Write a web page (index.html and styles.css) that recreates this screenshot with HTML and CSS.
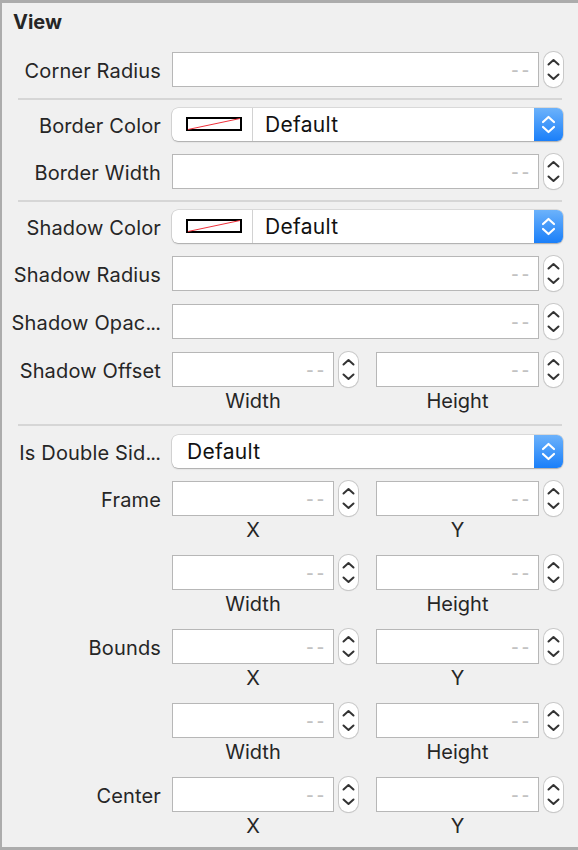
FILE: index.html
```html
<!DOCTYPE html>
<html>
<head>
<meta charset="utf-8">
<link rel="stylesheet" href="styles.css">
</head>
<body>
<div class="panel">
  <div class="title">View</div>

  <div class="section">
    <div class="row">
      <div class="label">Corner Radius</div>
      <div class="single">
        <div class="field"><span class="ph">--</span></div>
        <div class="stepper"><svg viewBox="0 0 19 35" width="19" height="35"><path d="M4.5 12.5 L9.5 8 L14.5 12.5" /><path d="M4.5 22.5 L9.5 27 L14.5 22.5" /></svg></div>
      </div>
    </div>
  </div>

  <div class="sep"></div>

  <div class="section">
    <div class="row">
      <div class="label label-pop">Border Color</div>
      <div class="popup">
        <div class="swatch"><svg viewBox="0 0 56 14" width="56" height="14"><rect x="1" y="1" width="54" height="12" fill="#fff" stroke="#000" stroke-width="2"/><line x1="2" y1="12.5" x2="54" y2="1.5" stroke="#f0323c" stroke-width="1"/></svg></div>
        <div class="pop-text">Default</div>
        <div class="pop-btn"><svg viewBox="0 0 29 33" width="29" height="33"><path d="M9 14 L14.5 9 L20 14" /><path d="M9 19 L14.5 24 L20 19" /></svg></div>
      </div>
    </div>
    <div class="row">
      <div class="label">Border Width</div>
      <div class="single">
        <div class="field"><span class="ph">--</span></div>
        <div class="stepper"><svg viewBox="0 0 19 35" width="19" height="35"><path d="M4.5 12.5 L9.5 8 L14.5 12.5" /><path d="M4.5 22.5 L9.5 27 L14.5 22.5" /></svg></div>
      </div>
    </div>
  </div>

  <div class="sep"></div>

  <div class="section">
    <div class="row">
      <div class="label label-pop">Shadow Color</div>
      <div class="popup">
        <div class="swatch"><svg viewBox="0 0 56 14" width="56" height="14"><rect x="1" y="1" width="54" height="12" fill="#fff" stroke="#000" stroke-width="2"/><line x1="2" y1="12.5" x2="54" y2="1.5" stroke="#f0323c" stroke-width="1"/></svg></div>
        <div class="pop-text">Default</div>
        <div class="pop-btn"><svg viewBox="0 0 29 33" width="29" height="33"><path d="M9 14 L14.5 9 L20 14" /><path d="M9 19 L14.5 24 L20 19" /></svg></div>
      </div>
    </div>
    <div class="row">
      <div class="label">Shadow Radius</div>
      <div class="single">
        <div class="field"><span class="ph">--</span></div>
        <div class="stepper"><svg viewBox="0 0 19 35" width="19" height="35"><path d="M4.5 12.5 L9.5 8 L14.5 12.5" /><path d="M4.5 22.5 L9.5 27 L14.5 22.5" /></svg></div>
      </div>
    </div>
    <div class="row">
      <div class="label">Shadow Opac<span class="ell">...</span></div>
      <div class="single">
        <div class="field"><span class="ph">--</span></div>
        <div class="stepper"><svg viewBox="0 0 19 35" width="19" height="35"><path d="M4.5 12.5 L9.5 8 L14.5 12.5" /><path d="M4.5 22.5 L9.5 27 L14.5 22.5" /></svg></div>
      </div>
    </div>
    <div class="row">
      <div class="label">Shadow Offset</div>
      <div class="pair">
        <div class="group g-left">
          <div class="field"><span class="ph">--</span></div>
          <div class="stepper"><svg viewBox="0 0 19 35" width="19" height="35"><path d="M4.5 12.5 L9.5 8 L14.5 12.5" /><path d="M4.5 22.5 L9.5 27 L14.5 22.5" /></svg></div>
          <div class="caption">Width</div>
        </div>
        <div class="group g-right">
          <div class="field"><span class="ph">--</span></div>
          <div class="stepper"><svg viewBox="0 0 19 35" width="19" height="35"><path d="M4.5 12.5 L9.5 8 L14.5 12.5" /><path d="M4.5 22.5 L9.5 27 L14.5 22.5" /></svg></div>
          <div class="caption">Height</div>
        </div>
      </div>
    </div>
  </div>

  <div class="sep sep-last"></div>

  <div class="section">
    <div class="row">
      <div class="label label-pop">Is Double Sid<span class="ell">...</span></div>
      <div class="popup">
        <div class="pop-text pop-text-plain">Default</div>
        <div class="pop-btn"><svg viewBox="0 0 29 33" width="29" height="33"><path d="M9 14 L14.5 9 L20 14" /><path d="M9 19 L14.5 24 L20 19" /></svg></div>
      </div>
    </div>
    <div class="row">
      <div class="label">Frame</div>
      <div class="pair">
        <div class="group g-left">
          <div class="field"><span class="ph">--</span></div>
          <div class="stepper"><svg viewBox="0 0 19 35" width="19" height="35"><path d="M4.5 12.5 L9.5 8 L14.5 12.5" /><path d="M4.5 22.5 L9.5 27 L14.5 22.5" /></svg></div>
          <div class="caption">X</div>
        </div>
        <div class="group g-right">
          <div class="field"><span class="ph">--</span></div>
          <div class="stepper"><svg viewBox="0 0 19 35" width="19" height="35"><path d="M4.5 12.5 L9.5 8 L14.5 12.5" /><path d="M4.5 22.5 L9.5 27 L14.5 22.5" /></svg></div>
          <div class="caption">Y</div>
        </div>
      </div>
    </div>
    <div class="row">
      <div class="label"></div>
      <div class="pair">
        <div class="group g-left">
          <div class="field"><span class="ph">--</span></div>
          <div class="stepper"><svg viewBox="0 0 19 35" width="19" height="35"><path d="M4.5 12.5 L9.5 8 L14.5 12.5" /><path d="M4.5 22.5 L9.5 27 L14.5 22.5" /></svg></div>
          <div class="caption">Width</div>
        </div>
        <div class="group g-right">
          <div class="field"><span class="ph">--</span></div>
          <div class="stepper"><svg viewBox="0 0 19 35" width="19" height="35"><path d="M4.5 12.5 L9.5 8 L14.5 12.5" /><path d="M4.5 22.5 L9.5 27 L14.5 22.5" /></svg></div>
          <div class="caption">Height</div>
        </div>
      </div>
    </div>
    <div class="row">
      <div class="label">Bounds</div>
      <div class="pair">
        <div class="group g-left">
          <div class="field"><span class="ph">--</span></div>
          <div class="stepper"><svg viewBox="0 0 19 35" width="19" height="35"><path d="M4.5 12.5 L9.5 8 L14.5 12.5" /><path d="M4.5 22.5 L9.5 27 L14.5 22.5" /></svg></div>
          <div class="caption">X</div>
        </div>
        <div class="group g-right">
          <div class="field"><span class="ph">--</span></div>
          <div class="stepper"><svg viewBox="0 0 19 35" width="19" height="35"><path d="M4.5 12.5 L9.5 8 L14.5 12.5" /><path d="M4.5 22.5 L9.5 27 L14.5 22.5" /></svg></div>
          <div class="caption">Y</div>
        </div>
      </div>
    </div>
    <div class="row">
      <div class="label"></div>
      <div class="pair">
        <div class="group g-left">
          <div class="field"><span class="ph">--</span></div>
          <div class="stepper"><svg viewBox="0 0 19 35" width="19" height="35"><path d="M4.5 12.5 L9.5 8 L14.5 12.5" /><path d="M4.5 22.5 L9.5 27 L14.5 22.5" /></svg></div>
          <div class="caption">Width</div>
        </div>
        <div class="group g-right">
          <div class="field"><span class="ph">--</span></div>
          <div class="stepper"><svg viewBox="0 0 19 35" width="19" height="35"><path d="M4.5 12.5 L9.5 8 L14.5 12.5" /><path d="M4.5 22.5 L9.5 27 L14.5 22.5" /></svg></div>
          <div class="caption">Height</div>
        </div>
      </div>
    </div>
    <div class="row">
      <div class="label">Center</div>
      <div class="pair">
        <div class="group g-left">
          <div class="field"><span class="ph">--</span></div>
          <div class="stepper"><svg viewBox="0 0 19 35" width="19" height="35"><path d="M4.5 12.5 L9.5 8 L14.5 12.5" /><path d="M4.5 22.5 L9.5 27 L14.5 22.5" /></svg></div>
          <div class="caption">X</div>
        </div>
        <div class="group g-right">
          <div class="field"><span class="ph">--</span></div>
          <div class="stepper"><svg viewBox="0 0 19 35" width="19" height="35"><path d="M4.5 12.5 L9.5 8 L14.5 12.5" /><path d="M4.5 22.5 L9.5 27 L14.5 22.5" /></svg></div>
          <div class="caption">Y</div>
        </div>
      </div>
    </div>
  </div>
</div>
</body>
</html>
```

FILE: styles.css
```css
* { box-sizing: border-box; }
html, body { margin: 0; padding: 0; }
body {
  font-family: Inter, "Liberation Sans", sans-serif;
  color: #262626;
  background: #f0f0f0;
}
.panel {
  width: 578px;
  height: 850px;
  background: #f0f0f0;
  border-top: 3px solid #acacac;
  border-left: 2px solid #acacac;
  border-bottom: 3px solid #acacac;
  padding-top: 7px;
}
.title {
  font-weight: 700;
  font-size: 20px;
  line-height: 24px;
  padding-left: 11px;
  color: #262626;
  margin-bottom: 18px;
}
.section {
  display: flex;
  flex-direction: column;
  gap: 13px;
}
.row {
  display: grid;
  grid-template-columns: 159px 391px;
  column-gap: 11px;
  align-items: start;
}
.label {
  font-size: 20px;
  letter-spacing: 0.15px;
  height: 35px;
  padding-top: 5px;
  line-height: 29px;
  text-align: right;
  white-space: nowrap;
  color: #262626;
}
.ell {
  letter-spacing: -0.9px;
  margin-right: 1px;
}
.label-pop {
  height: 33px;
  padding-top: 3px;
  line-height: 30px;
}
.single {
  display: grid;
  grid-template-columns: 367px 19px;
  column-gap: 5px;
}
.field {
  height: 35px;
  background: #fff;
  border: 1px solid #b7b7b7;
  display: flex;
  align-items: center;
  justify-content: flex-end;
  padding-right: 6px;
}
.ph {
  color: #c2c2c2;
  font-size: 22px;
  letter-spacing: 3px;
  line-height: 1;
  font-family: "Liberation Sans", sans-serif;
}
.stepper {
  width: 19px;
  height: 35px;
  background: #fff;
  border-radius: 9px;
  box-shadow: 0 0 0 1px #c9c9c9, 0 1px 1px rgba(0,0,0,0.18);
}
.stepper svg {
  display: block;
}
.stepper path {
  fill: none;
  stroke: #333;
  stroke-width: 2;
  stroke-linecap: round;
  stroke-linejoin: round;
}
.sep {
  margin: 11px 0 8px 16px;
  width: 544px;
  height: 2px;
  background: #d6d6d6;
}
.sep-last {
  margin-bottom: 9px;
}
.popup {
  height: 33px;
  background: #fff;
  border-radius: 6px;
  display: flex;
  overflow: hidden;
  box-shadow: 0 0 0 0.5px rgba(0,0,0,0.18), 0 1px 1.5px rgba(0,0,0,0.22);
}
.swatch {
  width: 81px;
  border-right: 1px solid #d2d2d2;
  padding: 9px 0 0 14px;
}
.swatch svg { display: block; }
.pop-text {
  flex: 1;
  font-size: 21px;
  letter-spacing: 0.3px;
  line-height: 33px;
  padding-left: 12px;
  color: #111;
}
.pop-text-plain {
  padding-left: 15px;
}
.pop-btn {
  width: 29px;
  height: 33px;
  background: linear-gradient(#6cb2fb, #1a7ff9);
}
.pop-btn svg { display: block; }
.pop-btn path {
  fill: none;
  stroke: #fff;
  stroke-width: 2.2;
  stroke-linecap: round;
  stroke-linejoin: round;
}
.pair {
  display: flex;
  gap: 18px;
}
.group {
  display: grid;
  column-gap: 5px;
}
.g-left { grid-template-columns: 162px 19px; }
.g-right { grid-template-columns: 163px 19px; }
.caption {
  grid-column: 1;
  text-align: center;
  font-size: 20px;
  line-height: 28px;
  height: 26px;
  color: #262626;
}
```
